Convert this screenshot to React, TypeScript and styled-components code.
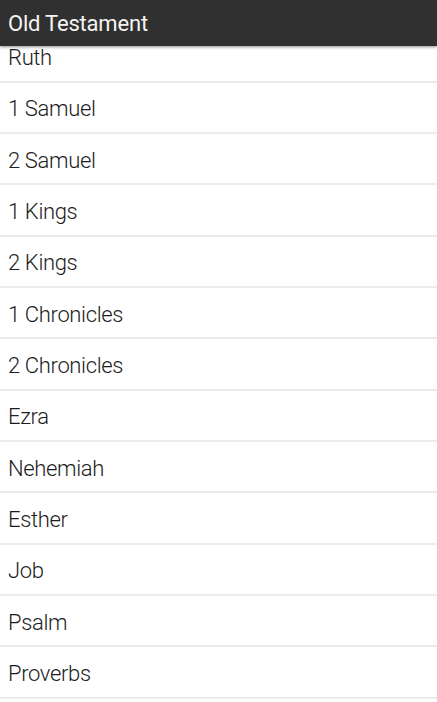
import React from 'react'
import styled, { createGlobalStyle } from 'styled-components'

const GlobalStyle = createGlobalStyle`
  html, body {
    margin: 0;
    padding: 0;
    background: #ffffff;
    font-family: Roboto, 'Noto Sans', sans-serif;
  }
`

const Screen = styled.div`
  display: flex;
  flex-direction: column;
  width: 437px;
  height: 702px;
  overflow: hidden;
  background: #ffffff;
`

const ActionBar = styled.header`
  position: relative;
  z-index: 2;
  display: flex;
  align-items: center;
  flex: 0 0 auto;
  height: 46px;
  padding: 0 8px;
  background: #303030;
  box-shadow: 0 1px 3px rgba(0, 0, 0, 0.45);
`

const Title = styled.h1`
  margin: 0;
  font-size: 22px;
  font-weight: 400;
  letter-spacing: -0.2px;
  color: #f4f4f4;
`

const BookList = styled.ul`
  list-style: none;
  margin: -14.5px 0 0;
  padding: 0;
`

const BookRow = styled.li`
  box-sizing: border-box;
  display: flex;
  align-items: center;
  height: 51.33px;
  padding: 3px 8px 0;
  border-bottom: 2px solid #ececec;
  font-size: 22px;
  font-weight: 300;
  letter-spacing: -0.35px;
  color: #1c1c1c;
`

const books = [
  'Ruth',
  '1 Samuel',
  '2 Samuel',
  '1 Kings',
  '2 Kings',
  '1 Chronicles',
  '2 Chronicles',
  'Ezra',
  'Nehemiah',
  'Esther',
  'Job',
  'Psalm',
  'Proverbs',
]

export default function App() {
  return (
    <>
      <GlobalStyle />
      <Screen>
        <ActionBar>
          <Title>Old Testament</Title>
        </ActionBar>
        <BookList>
          {books.map((b) => (
            <BookRow key={b}>{b}</BookRow>
          ))}
        </BookList>
      </Screen>
    </>
  )
}
